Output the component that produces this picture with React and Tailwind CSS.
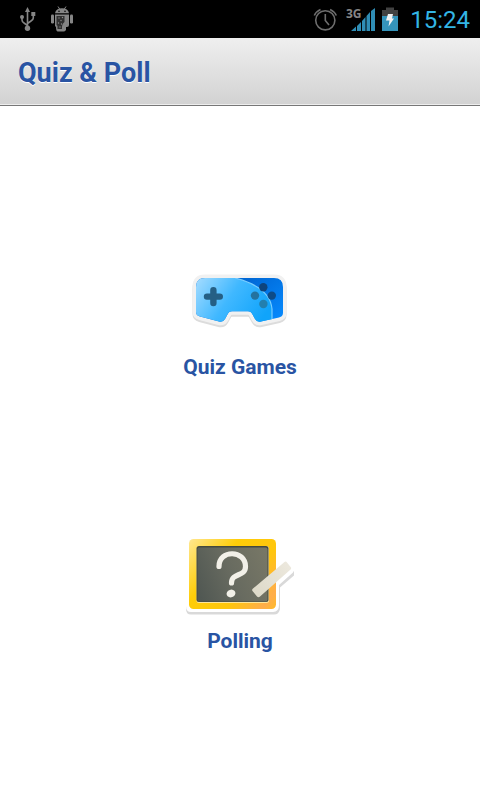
import React from "react";

function UsbIcon() {
  return (
    <svg width="20" height="28" viewBox="18 5 20 28" fill="none" stroke="#858585" strokeWidth="1.6" aria-hidden="true">
      <path d="M27.5 28V11M27.5 25.500L24 23Q22 22 22 20V17M27.5 23.500L31 21Q33.300 19.500 33.300 18V15" />
      <path d="M27.5 7L30 12H25Z" fill="#858585" stroke="none" />
      <circle cx="27.5" cy="28.3" r="2.7" fill="#858585" stroke="none" />
      <circle cx="22" cy="17" r="2" fill="#858585" stroke="none" />
      <path d="M31.3 12h4v4h-4z" fill="#858585" stroke="none" />
    </svg>
  );
}

function DebugIcon() {
  return (
    <svg width="24" height="28" viewBox="51 5 24 28" aria-hidden="true">
      <g fill="#858585">
        <path d="M56 13.200Q57 8.300 63 8.300Q69 8.300 70 13.200Z" />
        <path d="M59 6.500L61 9.500M67 6.500L65 9.500" stroke="#858585" strokeWidth="1" />
        <rect x="52" y="14.500" width="3" height="9" rx="1.200" />
        <rect x="71" y="14.500" width="3" height="9" rx="1.200" />
        <path d="M56 14.500H70V25Q70 27 68 27H67V30Q65.500 32 64 31.500H58.500Q57 31 57 27L56 26Z" />
      </g>
      <path d="M57.500 16H65.500V22Q62.500 24 63 29H58.500V26L57.500 25Z" fill="#303030" />
      <g fill="#8c8c8c">
        <circle cx="60" cy="18" r="0.700" /><circle cx="63.500" cy="17.500" r="0.700" />
        <circle cx="62" cy="20.500" r="0.700" /><circle cx="59.500" cy="23" r="0.700" />
        <circle cx="62.500" cy="24" r="0.700" /><circle cx="61" cy="27" r="0.700" />
      </g>
      <g fill="#000">
        <circle cx="60" cy="11.300" r="0.800" /><circle cx="66" cy="11.300" r="0.800" />
      </g>
    </svg>
  );
}

function AlarmIcon() {
  return (
    <svg width="26" height="26" viewBox="312 6 26 26" fill="none" stroke="#6e6e6e" strokeWidth="1.6" aria-hidden="true">
      <circle cx="325.300" cy="20.300" r="9.600" />
      <path d="M325.300 14V20.500L329 25M314.300 15.500Q316 11.500 320.500 9.500M336.300 15.500Q334.600 11.500 330.100 9.500" />
    </svg>
  );
}

function SignalIcon() {
  return (
    <svg width="32" height="28" viewBox="344 4 32 28" aria-hidden="true">
      <path d="M351 30L356 25.500V30ZM357 25L361 21V30H357ZM362 20L365.500 16V30H362ZM366.500 15L370 11V30H366.500ZM371 10L375 7V30H371Z" fill="#2f8db5" />
      <text x="346" y="17" fill="#858585" className="font-['Open_Sans',sans-serif] text-[12px] font-bold">3G</text>
    </svg>
  );
}

function BatteryIcon() {
  return (
    <svg width="16" height="26" viewBox="383 5 16 26" aria-hidden="true">
      <path d="M387 6.500H395V9H399V16H383V9H387Z" fill="#424242" />
      <path d="M383 15H399V30H383Z" fill="#3594bb" />
      <path d="M389 13H394L393 17.500H395L389.500 25.500L390.500 19.500H387Z" fill="#f2f2f2" />
    </svg>
  );
}

const padShape =
  "M205 278H274Q283 278 283 287V313Q283 316.500 279 317.500L261 321.500Q257 322.500 255 319L252 313.500Q250.800 311.300 248 311.300H232Q229 311.300 228 313.500L225 319Q223 322.500 219 321.500L200 316.500Q196 315.500 196 312V287Q196 278 205 278Z";

function GamepadIcon() {
  return (
    <svg width="128" height="96" viewBox="176 252 128 96" aria-hidden="true">
      <defs>
        <linearGradient id="padLight" x1="196" y1="278" x2="260" y2="322" gradientUnits="userSpaceOnUse">
          <stop offset="0" stopColor="#a5dcff" />
          <stop offset="0.500" stopColor="#40b8ff" />
          <stop offset="1" stopColor="#10a4fb" />
        </linearGradient>
        <linearGradient id="padDark" x1="250" y1="278" x2="283" y2="320" gradientUnits="userSpaceOnUse">
          <stop offset="0" stopColor="#0068d6" />
          <stop offset="1" stopColor="#078bff" />
        </linearGradient>
        <clipPath id="padClip"><path d={padShape} /></clipPath>
      </defs>
      <path d={padShape} transform="translate(0 2)" fill="#dcdcdc" stroke="#dcdcdc" strokeWidth="7" strokeLinejoin="round" />
      <path d={padShape} fill="#f1f1f1" stroke="#f1f1f1" strokeWidth="7" strokeLinejoin="round" />
      <g clipPath="url(#padClip)">
        <path d="M190 270H290V330H190Z" fill="url(#padDark)" />
        <path d="M190 270H225L235 278Q270 287 272 309V330H190Z" fill="url(#padLight)" />
        <path d="M235 278Q270 287 272 309V325" fill="none" stroke="#78cdff" strokeWidth="1.200" />
      </g>
      <path d="M213.400 290.300V303M207 296.600H219.800" stroke="#255f85" strokeWidth="6.400" strokeLinecap="round" />
      <circle cx="263.300" cy="287.200" r="4.200" fill="#0e447d" />
      <circle cx="271.800" cy="295.600" r="4.200" fill="#0e4b87" />
      <circle cx="255" cy="295.600" r="4.200" fill="#24739f" />
      <circle cx="263.400" cy="304" r="4.200" fill="#237fae" />
    </svg>
  );
}

function BoardIcon() {
  return (
    <svg width="128" height="96" viewBox="176 526 128 96" aria-hidden="true">
      <defs>
        <linearGradient id="frame" x1="189" y1="539" x2="276" y2="609" gradientUnits="userSpaceOnUse">
          <stop offset="0" stopColor="#ffe791" />
          <stop offset="0.350" stopColor="#ffcd08" />
          <stop offset="0.650" stopColor="#ffc60c" />
          <stop offset="0.900" stopColor="#ffad4b" />
          <stop offset="1" stopColor="#ffbc27" />
        </linearGradient>
        <linearGradient id="slate" x1="197" y1="590" x2="268" y2="560" gradientUnits="userSpaceOnUse">
          <stop offset="0" stopColor="#515853" />
          <stop offset="0.500" stopColor="#686b60" />
          <stop offset="1" stopColor="#777766" />
        </linearGradient>
        <linearGradient id="chalk" x1="254" y1="590" x2="289" y2="566" gradientUnits="userSpaceOnUse">
          <stop offset="0" stopColor="#dedac9" />
          <stop offset="1" stopColor="#ece8dd" />
        </linearGradient>
      </defs>
      <path d="M186 605V609Q186 614.500 191 614.500H274Q279 614.500 280 609V587.500L294 575.500V569L270 570V600Z" fill="#d9d9d9" />
      <path d="M186 536H279L288 558L294 567Q295 570 293 572.500L279 585V605Q279 612 273 612H191Q186 612 186 606Z" fill="#fff" />
      <rect x="189" y="539" width="87" height="70" rx="4.500" fill="url(#frame)" />
      <rect x="196.500" y="546" width="72.500" height="57" rx="2.500" fill="#ffe69a" />
      <rect x="196.500" y="546" width="72" height="56" rx="2.500" fill="#45493d" />
      <rect x="197.500" y="547.500" width="70" height="54" rx="2" fill="url(#slate)" />
      <path d="M219 566.500C219 549 245.500 550 245.500 566.500C245.500 577 231.500 572.500 231.500 583" fill="none" stroke="#f2f0e8" strokeWidth="5.200" strokeLinecap="round" />
      <ellipse cx="231" cy="593.500" rx="4.500" ry="3.800" transform="rotate(-20 231 593.500)" fill="#f2f0e8" />
      <path d="M253 588.500L284.500 562Q286 561 287 562.500L291 567.500Q291.500 569 290 570L260 596.500Q258.500 598 257 596.500L252.500 591Q251.500 589.500 253 588.500Z" fill="url(#chalk)" />
    </svg>
  );
}

function MenuItem({ icon, label }) {
  return (
    <button type="button" className="flex flex-col items-center gap-1 text-[21px] leading-[30px] font-bold text-[#2954a3]">
      {icon}
      <span>{label}</span>
    </button>
  );
}

export default function App() {
  return (
    <div className="flex min-h-screen flex-col bg-white font-['Roboto',sans-serif]">
      <div className="flex h-[38px] shrink-0 items-center justify-between bg-black pr-2.5 pl-[18px]">
        <div className="flex items-center gap-3">
          <UsbIcon />
          <DebugIcon />
        </div>
        <div className="flex items-center gap-1.5">
          <AlarmIcon />
          <SignalIcon />
          <BatteryIcon />
          <time className="pt-0.5 pl-1.5 text-[24px] leading-8 text-[#33b5e5]">15:24</time>
        </div>
      </div>
      <header className="flex h-[68px] shrink-0 items-center border-b border-[#777] bg-linear-to-b from-[#efefef] to-[#d2d2d2] px-[18px] pt-0.5 shadow-[inset_0_-1px_0_#eee]">
        <h1 className="text-[27px] leading-8 font-bold text-[#2954a3] [text-shadow:0_1px_0_#fff]">Quiz &amp; Poll</h1>
      </header>
      <main className="flex grow flex-col items-center justify-evenly pt-0.5">
        <MenuItem icon={<GamepadIcon />} label="Quiz Games" />
        <MenuItem icon={<BoardIcon />} label="Polling" />
      </main>
    </div>
  );
}
